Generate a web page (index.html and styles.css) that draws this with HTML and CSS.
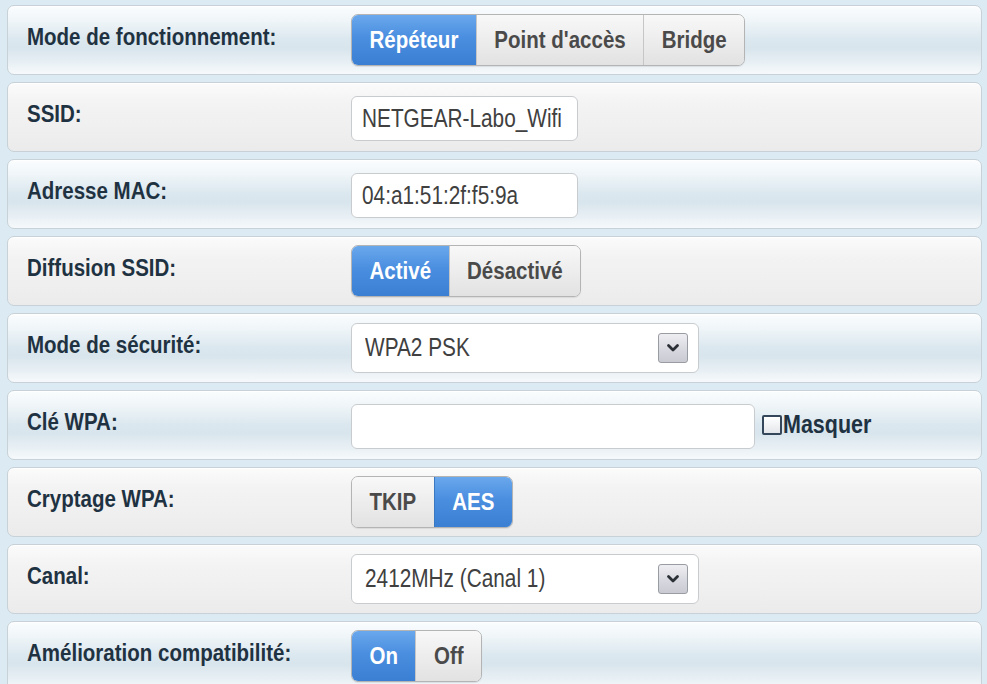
FILE: index.html
```html
<!DOCTYPE html>
<html lang="fr">
<head>
<meta charset="utf-8">
<title>Paramètres sans fil</title>
<link rel="stylesheet" href="styles.css">
</head>
<body>
<div class="panel">
  <div class="row blue">
    <div class="label"><span class="t">Mode de fonctionnement:</span></div>
    <div class="ctrl">
      <div class="seg">
        <span class="opt on"><span class="t">Répéteur</span></span>
        <span class="opt"><span class="t">Point d'accès</span></span>
        <span class="opt"><span class="t">Bridge</span></span>
      </div>
    </div>
  </div>
  <div class="row gray">
    <div class="label"><span class="t">SSID:</span></div>
    <div class="ctrl">
      <div class="field short"><span class="t">NETGEAR-Labo_Wifi</span></div>
    </div>
  </div>
  <div class="row blue">
    <div class="label"><span class="t">Adresse MAC:</span></div>
    <div class="ctrl">
      <div class="field short"><span class="t">04:a1:51:2f:f5:9a</span></div>
    </div>
  </div>
  <div class="row gray">
    <div class="label"><span class="t">Diffusion SSID:</span></div>
    <div class="ctrl">
      <div class="seg">
        <span class="opt on"><span class="t">Activé</span></span>
        <span class="opt"><span class="t">Désactivé</span></span>
      </div>
    </div>
  </div>
  <div class="row blue">
    <div class="label"><span class="t">Mode de sécurité:</span></div>
    <div class="ctrl">
      <div class="field select"><span class="t">WPA2 PSK</span>
        <span class="arrow"><svg width="14" height="10" viewBox="0 0 14 10"><path d="M2.5 2.5 L7 7 L11.5 2.5" fill="none" stroke="#2b2f36" stroke-width="2.8" stroke-linecap="round" stroke-linejoin="round"/></svg></span>
      </div>
    </div>
  </div>
  <div class="row blue">
    <div class="label"><span class="t">Clé WPA:</span></div>
    <div class="ctrl">
      <div class="field long"></div>
      <span class="check"></span>
      <span class="mask"><span class="t">Masquer</span></span>
    </div>
  </div>
  <div class="row gray">
    <div class="label"><span class="t">Cryptage WPA:</span></div>
    <div class="ctrl">
      <div class="seg">
        <span class="opt"><span class="t">TKIP</span></span>
        <span class="opt on"><span class="t">AES</span></span>
      </div>
    </div>
  </div>
  <div class="row gray">
    <div class="label"><span class="t">Canal:</span></div>
    <div class="ctrl">
      <div class="field select"><span class="t">2412MHz (Canal 1)</span>
        <span class="arrow"><svg width="14" height="10" viewBox="0 0 14 10"><path d="M2.5 2.5 L7 7 L11.5 2.5" fill="none" stroke="#2b2f36" stroke-width="2.8" stroke-linecap="round" stroke-linejoin="round"/></svg></span>
      </div>
    </div>
  </div>
  <div class="row blue">
    <div class="label"><span class="t">Amélioration compatibilité:</span></div>
    <div class="ctrl">
      <div class="seg">
        <span class="opt on"><span class="t">On</span></span>
        <span class="opt"><span class="t">Off</span></span>
      </div>
    </div>
  </div>
</div>
</body>
</html>
```

FILE: styles.css
```css
html, body {
  margin: 0;
  padding: 0;
  background: #dcebf3;
  font-family: "Liberation Sans", Arial, sans-serif;
  overflow: hidden;
}

.panel {
  display: flex;
  flex-direction: column;
  gap: 7px;
  padding: 5px 0 0 7px;
  width: 975px;
}

.t {
  display: inline-block;
  transform: scaleY(1.2);
  white-space: pre;
}

.row {
  box-sizing: border-box;
  height: 70px;
  flex: 0 0 70px;
  display: flex;
  align-items: center;
  padding-left: 19px;
  border: 1px solid #c7d1d7;
  border-radius: 7px;
  box-shadow: inset 0 1px 0 #ffffff;
}

.row.blue {
  background: linear-gradient(180deg, #fbfdfe 0%, #eff5f8 22%, #dce8ef 48%, #d8e5ec 62%, #e7eff4 82%, #f6f9fb 100%);
}

.row.gray {
  background: linear-gradient(180deg, #fbfbfb 0%, #f3f3f3 30%, #efefef 70%, #ebebeb 100%);
}

.label {
  width: 324px;
  flex: 0 0 324px;
  font-size: 20.5px;
  font-weight: bold;
  color: #1f3242;
  margin-bottom: 6px;
}

.ctrl {
  display: flex;
  align-items: center;
}

.seg {
  box-sizing: border-box;
  height: 52px;
  display: flex;
  border: 1px solid #b4b4b4;
  border-radius: 7px;
  overflow: hidden;
  box-shadow: 0 1px 1px rgba(0, 0, 0, 0.08);
}

.opt {
  display: flex;
  align-items: center;
  padding: 0 17.5px;
  font-size: 20.5px;
  font-weight: bold;
  color: #4a4a4a;
  background: linear-gradient(180deg, #f8f8f8 0%, #ededed 50%, #e2e2e2 100%);
}

.opt + .opt {
  border-left: 1px solid #c6c6c6;
}

.opt.on {
  color: #ffffff;
  background: linear-gradient(180deg, #6aa8ec 0%, #4a8ee0 45%, #3b7fd3 100%);
  border-color: #3b78c2;
}

.field {
  box-sizing: border-box;
  height: 45px;
  display: flex;
  align-items: center;
  padding: 0 10px;
  background: #ffffff;
  border: 1px solid #c9cccf;
  border-radius: 6px;
  font-size: 20.8px;
  color: #404040;
  margin-top: 3px;
}

.field.short {
  width: 227px;
}

.field.long {
  width: 404px;
}

.field.select {
  width: 348px;
  height: 50px;
  padding-left: 13px;
  justify-content: space-between;
  padding-right: 10px;
  margin-top: 0;
}

.arrow {
  box-sizing: border-box;
  width: 30px;
  height: 30px;
  display: flex;
  align-items: center;
  justify-content: center;
  border: 1px solid #9a9ca3;
  border-radius: 3px;
  background: linear-gradient(180deg, #eeeef2 0%, #d6d7de 60%, #c9cad2 100%);
}

.check {
  box-sizing: border-box;
  width: 20px;
  height: 20px;
  margin-left: 7px;
  border: 2px solid #34465a;
  border-radius: 2px;
  background: linear-gradient(180deg, #ffffff 0%, #e3e6e9 100%);
}

.mask {
  font-size: 21.5px;
  font-weight: bold;
  color: #1f3242;
  margin-left: 1px;
}
```
